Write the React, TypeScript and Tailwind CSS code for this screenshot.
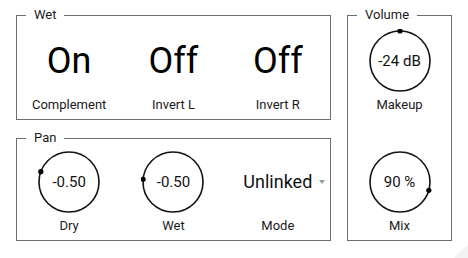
import React from "react";

// Panel de efectos: grupos Wet / Pan / Volume con knobs circulares.

type KnobProps = {
  value: string;
  dot: [number, number];
};

function Knob({ value, dot }: KnobProps) {
  return (
    <div className="relative h-[64px] w-[64px]">
      <svg width="64" height="64" viewBox="0 0 64 64" className="absolute inset-0">
        <circle cx="32" cy="32" r="30" fill="none" stroke="#111" strokeWidth="1.6" />
        <circle cx={dot[0]} cy={dot[1]} r="2.6" fill="#000" />
      </svg>
      <div className="absolute inset-0 flex items-center justify-center text-[15px] leading-none text-[#111]">
        {value}
      </div>
    </div>
  );
}

function Label({ children }: { children: React.ReactNode }) {
  return <div className="mt-1 text-[13px] leading-4 text-[#1a1a1a]">{children}</div>;
}

function Group({
  title,
  className,
  children,
}: {
  title: string;
  className?: string;
  children: React.ReactNode;
}) {
  return (
    <fieldset className={`border border-[#6e6e6e] ${className ?? ""}`}>
      <legend className="ml-[9px] px-2 text-[13px] leading-[14px] text-[#1a1a1a]">{title}</legend>
      {children}
    </fieldset>
  );
}

function Toggle({ value, label }: { value: string; label: string }) {
  return (
    <div className="flex flex-col items-center">
      <div className="flex h-[64px] items-center justify-center text-[36px] leading-none text-black">
        {value}
      </div>
      <Label>{label}</Label>
    </div>
  );
}

export default function App() {
  return (
    <div
      className="relative flex h-[258px] w-[468px] gap-4 overflow-hidden bg-white px-4 pt-2"
      style={{ fontFamily: "Roboto, 'Liberation Sans', sans-serif" }}
    >
      <div className="flex w-[315px] flex-col gap-[11px]">
        <Group title="Wet" className="grid grid-cols-3 pb-[6px] pt-[7px]">
          <Toggle value="On" label="Complement" />
          <Toggle value="Off" label="Invert L" />
          <Toggle value="Off" label="Invert R" />
        </Group>

        <Group title="Pan" className="grid grid-cols-3 pb-[6px] pt-[5px]">
          <div className="flex flex-col items-center">
            <Knob value="-0.50" dot={[3.8, 21.7]} />
            <Label>Dry</Label>
          </div>
          <div className="flex flex-col items-center">
            <Knob value="-0.50" dot={[2.1, 29.3]} />
            <Label>Wet</Label>
          </div>
          <div className="flex flex-col items-center">
            <div className="flex h-[64px] items-center justify-center">
              <span className="relative text-[18px] leading-none text-[#111]">
                Unlinked
                <svg
                  width="6"
                  height="4"
                  viewBox="0 0 6 4"
                  className="absolute left-full top-1/2 ml-[7px] -translate-y-1/2"
                >
                  <path d="M0 0 L6 0 L3 4 Z" fill="#9a9a9a" />
                </svg>
              </span>
            </div>
            <Label>Mode</Label>
          </div>
        </Group>
      </div>

      <Group title="Volume" className="flex h-[233px] w-[105px] flex-col items-center pb-[6px] pt-[7px]">
        <Knob value="-24 dB" dot={[32, 2]} />
        <Label>Makeup</Label>
        <div className="mt-[37px]">
          <Knob value="90 %" dot={[60.8, 40.3]} />
        </div>
        <Label>Mix</Label>
      </Group>

      <svg width="14" height="14" viewBox="0 0 14 14" className="absolute bottom-0 right-0">
        <path d="M14 0 L14 14 L0 14 Z" fill="#f3f3f3" />
      </svg>
    </div>
  );
}
